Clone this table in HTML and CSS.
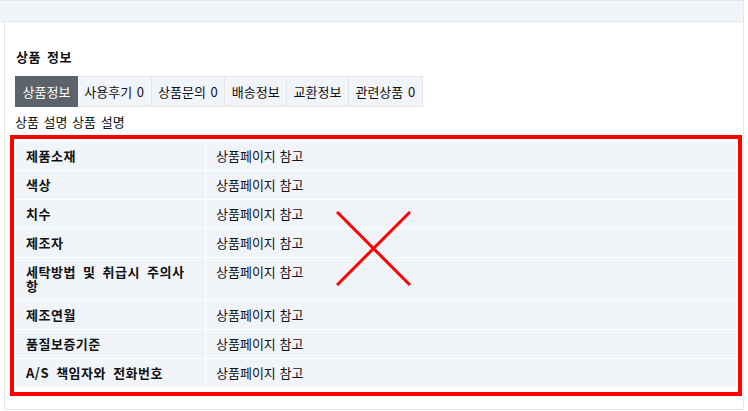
FILE: index.html
```html
<!DOCTYPE html>
<html lang="ko">
<head>
    <meta charset="UTF-8">
    <meta name="viewport" content="width=device-width, initial-scale=1.0">
    <title>상품 정보</title>
    <link rel="stylesheet" href="styles.css">
</head>
<body>
    <div class="top-bar"></div>

    <div class="panel">
        <h3 class="panel-title">상품 정보</h3>

        <div class="tabs">
            <span class="tab active">상품정보</span>
            <span class="tab">사용후기 0</span>
            <span class="tab">상품문의 0</span>
            <span class="tab">배송정보</span>
            <span class="tab">교환정보</span>
            <span class="tab">관련상품 0</span>
        </div>

        <p class="description">상품 설명 상품 설명</p>

        <div class="info-box">
            <table class="info-table">
                <tr><th>제품소재</th><td>상품페이지 참고</td></tr>
                <tr><th>색상</th><td>상품페이지 참고</td></tr>
                <tr><th>치수</th><td>상품페이지 참고</td></tr>
                <tr><th>제조자</th><td>상품페이지 참고</td></tr>
                <tr><th>세탁방법 및 취급시 주의사항</th><td>상품페이지 참고</td></tr>
                <tr><th>제조연월</th><td>상품페이지 참고</td></tr>
                <tr><th>품질보증기준</th><td>상품페이지 참고</td></tr>
                <tr><th>A/S 책임자와 전화번호</th><td>상품페이지 참고</td></tr>
            </table>

            <!-- placeholder cross over the table -->
            <svg class="cross" width="75" height="75" viewBox="0 0 75 75">
                <line x1="1" y1="1" x2="74" y2="74" stroke="#ff0000" stroke-width="3" />
                <line x1="74" y1="1" x2="1" y2="74" stroke="#ff0000" stroke-width="3" />
            </svg>
        </div>
    </div>
</body>
</html>
```

FILE: styles.css
```css
body {
    margin: 0;
    background-color: #fff;
    font-family: 'Noto Sans CJK KR', 'Noto Sans', sans-serif;
    font-size: 13px;
    color: #111;
}

.top-bar {
    width: 743px;
    height: 20px;
    background-color: #f1f4f9;
    border: 1px solid #e4e6ea;
    border-left: none;
}

.panel {
    width: 732px;
    margin-left: 4px;
    padding: 27px 1px 13px 5px;
    border: 1px solid #e4e6ea;
    border-top: none;
}

.panel-title {
    margin: 0 0 0 6px;
    font-size: 13px;
    line-height: 16px;
    font-weight: bold;
    letter-spacing: 0.5px;
    word-spacing: 2px;
}

.tabs {
    display: flex;
    margin: 11px 0 0 5px;
}

.tab {
    padding: 0 6.5px;
    line-height: 29px;
    background-color: #f1f4f9;
    border: 1px solid #e2e5e9;
    border-left: none;
    white-space: nowrap;
    word-spacing: 1px;
}

.tab:first-child {
    border-left: 1px solid #e2e5e9;
}

.tab.active {
    background-color: #5d636b;
    border-color: #5d636b;
    color: #fff;
}

.description {
    margin: 7px 0 0 5px;
    line-height: 16px;
    word-spacing: 1px;
}

.info-box {
    position: relative;
    margin-top: 5px;
    padding: 2px 1px 4px;
    border: 4px solid #ff0000;
}

.info-table {
    width: 100%;
    border-collapse: separate;
    border-spacing: 1px;
}

.info-table th,
.info-table td {
    padding: 7px 10px;
    line-height: 14px;
    background-color: #f1f4f9;
    text-align: left;
    vertical-align: top;
}

.info-table th {
    width: 161px;
    padding-right: 18px;
    font-weight: bold;
    letter-spacing: 0.5px;
    word-spacing: 3px;
}

.cross {
    position: absolute;
    left: 322px;
    top: 72px;
}
```
